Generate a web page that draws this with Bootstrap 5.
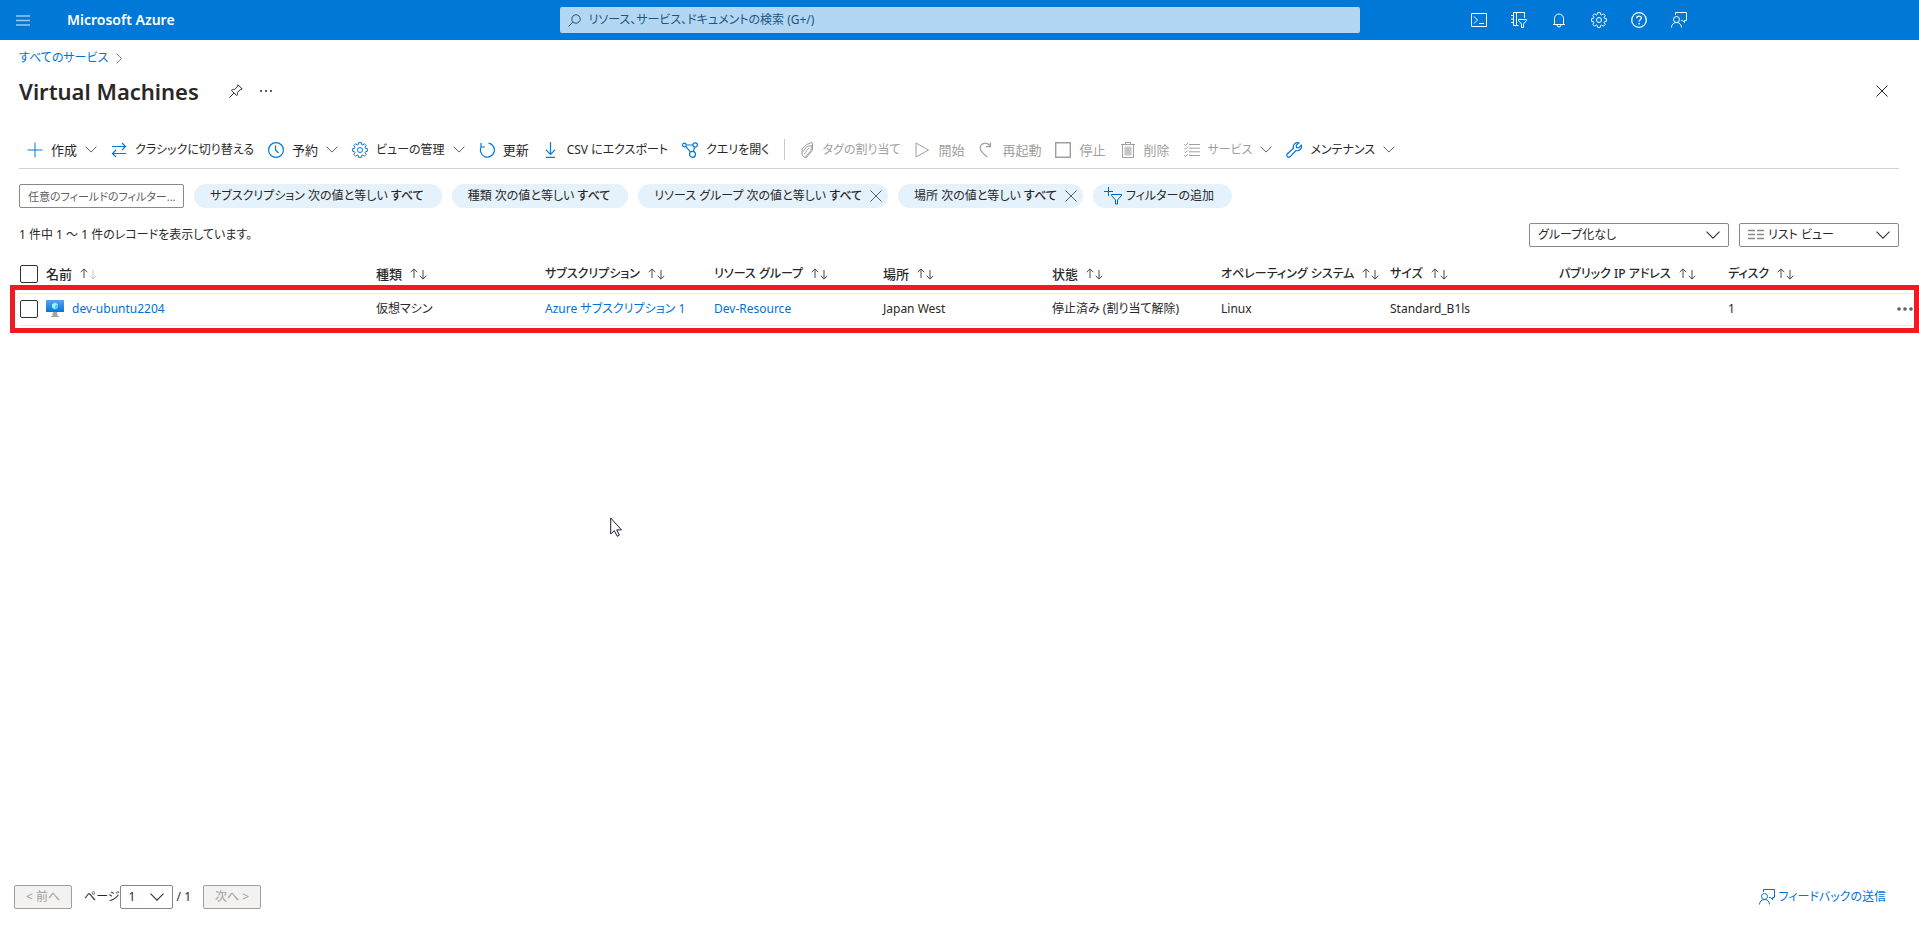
<!DOCTYPE html>
<html lang="ja">
<head>
<meta charset="utf-8">
<meta name="viewport" content="width=device-width, initial-scale=1">
<title>Virtual Machines - Microsoft Azure</title>
<link href="https://cdn.jsdelivr.net/npm/bootstrap@5.3.0/dist/css/bootstrap.min.css" rel="stylesheet">
<style>
  :root { --az-blue: #0078d7; --az-ink: #292827; --az-line: #d2d0ce; }
  body { font-family: "Noto Sans", "Noto Sans CJK JP", sans-serif; font-size: 12px; line-height: 18px; color: var(--az-ink); font-feature-settings: "palt"; }
  button, input, select { font-feature-settings: inherit; }
  a { color: #0072d6; text-decoration: none; }
  svg { display: block; flex: none; fill: none; stroke: currentColor; }
  svg.solid { stroke: none; fill: currentColor; }
  .topbar { display: grid; grid-template-columns: 1fr minmax(200px, 800px) 1fr; height: 40px; background: var(--az-blue); color: #fff; }
  .icon-btn { display: flex; align-items: center; justify-content: center; width: 40px; height: 40px; padding: 0; border: 0; background: none; color: inherit; }
  .icon-btn.compact { width: 26px; height: 26px; }
  .icon-btn.menu { width: 46px; }
  .top-tools { padding-left: 99px; }
  .brand { font-size: 14px; font-weight: 600; color: #fff; margin-left: 21px; }
  .top-search { height: 26px; border: 0; border-radius: 2px; background: #b3d7f3; color: #1b5586; }
  .top-search input { border: 0; background: none; color: inherit; outline: 0; padding: 0; }
  .top-search input::placeholder { color: #1b5586; opacity: 1; }
  .page-pad { padding-left: 19px; padding-right: 20px; }
  .crumbs { padding-top: 9px; padding-bottom: 8px; }
  .page-title { font-size: 22px; line-height: 32px; font-weight: 600; margin: 0; }
  .cmdbar { height: 38px; border-bottom: 1px solid var(--az-line); padding-left: 8px; gap: 14px; }
  .cmd { display: flex; align-items: center; gap: 8px; padding: 0; border: 0; background: none; color: var(--az-ink); white-space: nowrap; }
  .kanji { font-size: 13px; }
  .cmd svg { color: var(--az-blue); }
  .cmd svg.chev { color: #605e5c; }
  .cmd:disabled, .cmd:disabled svg, .cmd.off, .cmd.off svg { color: #a19f9d; }
  .cmd.off svg.chev { color: #605e5c; }
  .field { height: 24px; font-size: 12px; line-height: 18px; padding: 2px 8px; border: 1px solid #8a8886; border-radius: 2px; color: var(--az-ink); background-color: #fff; text-overflow: ellipsis; }
  .field::placeholder { color: #605e5c; opacity: 1; font-size: 11px; }
  select.field { padding-right: 24px; background-image: url("data:image/svg+xml,%3Csvg xmlns='http://www.w3.org/2000/svg' width='14' height='8'%3E%3Cpath d='M.5.7 7 7.2 13.500.7' fill='none' stroke='%23323130' stroke-width='1.1'/%3E%3C/svg%3E"); background-position: right 8px center; background-size: 14px 8px; }
  select.view-mode { padding-left: 28px; background-image: url("data:image/svg+xml,%3Csvg xmlns='http://www.w3.org/2000/svg' width='14' height='8'%3E%3Cpath d='M.5.7 7 7.2 13.500.7' fill='none' stroke='%23323130' stroke-width='1.1'/%3E%3C/svg%3E"), url("data:image/svg+xml,%3Csvg xmlns='http://www.w3.org/2000/svg' width='16' height='12'%3E%3Cpath d='M0 1.500h7M9 1.500h7M0 5.500h7M9 5.500h7M0 9.500h7M9 9.500h7' stroke='%238a8886' stroke-width='1.500'/%3E%3C/svg%3E"); background-repeat: no-repeat; background-position: right 8px center, left 8px center; background-size: 14px 8px, 16px 12px; }
  .w-filter { width: 165px; padding-right: 4px; } .w-group { width: 200px; } .w-view { width: 160px; } .w-page { width: 53px; }
  .filters { gap: 10px; padding-top: 15px; }
  .records { gap: 10px; padding-top: 15px; }
  .pill { display: flex; align-items: center; height: 24px; padding: 0 18px 0 16px; border: 0; border-radius: 12px; background: #e5f1fb; color: var(--az-ink); white-space: nowrap; }
  .pill b { font-weight: 500; }
  .pill.closable { padding-right: 6px; }
  .pill.add { padding-left: 11px; }
  .pill-x { border: 0; background: none; padding: 0; color: #605e5c; margin-left: 8px; }
  .grid-wrap { padding: 9px 0 0 19px; }
  .vm-table { table-layout: fixed; margin: 0; width: 100%; }
  .vm-table th, .vm-table td { padding: 0; vertical-align: middle; white-space: nowrap; color: var(--az-ink); }
  .vm-table th { height: 37px; font-weight: 500; border-bottom: 1px solid #edebe9; }
  .vm-table td { height: 32px; border-bottom: 1px solid #edebe9; }
  .col-check { width: 27px; } .col-name { width: 330px; } .col-more { width: 22px; }
  .vm-table .form-check-input { display: block; width: 18px; height: 18px; margin: 0 0 0 1px; border: 1px solid #323130; border-radius: 2px; }
  .sort { display: inline-flex; align-items: center; gap: 8px; padding: 0; border: 0; background: none; color: inherit; font-weight: inherit; }
  .sort svg { color: #484644; }
  .sort .idle { stroke: #c8c6c4; }
  .row-mark { position: absolute; left: 10px; right: 0; top: 38px; height: 48px; border: 5px solid #ed1c24; pointer-events: none; }
  .pager { padding: 0 33px 19px 14px; }
  .page-btn { height: 24px; width: 58px; padding: 0; font-size: 12px; border: 1px solid #a19f9d; border-radius: 2px; background: #f3f2f1; color: #a19f9d; }
  .pointer { position: absolute; left: 610px; top: 517px; pointer-events: none; }
  svg.pointer { fill: #fff; color: #1f1c33; }
</style>
</head>
<body class="d-flex flex-column min-vh-100">
<svg width="0" height="0" class="position-absolute" aria-hidden="true">
  <symbol id="i-chev" viewBox="0 0 12 7"><path d="M.5.6 6 6.100 11.500.6"/></symbol>
  <symbol id="i-x" viewBox="0 0 12 12"><path d="M.5.5l11 11M11.500.5l-11 11"/></symbol>
  <symbol id="i-gear" viewBox="0 0 16 16"><path d="M6.700.6h2.600l.4 1.900 1 .4 1.700-1.100 1.800 1.800-1.100 1.700.4 1 1.900.4v2.600l-1.900.4-.4 1 1.100 1.700-1.800 1.800-1.700-1.100-1 .4-.4 1.900H6.700l-.4-1.900-1-.4-1.700 1.100-1.800-1.800 1.100-1.700-.4-1-1.900-.4V6.700l1.900-.4.4-1-1.100-1.700 1.800-1.800 1.700 1.100 1-.4z"/><circle cx="8" cy="8" r="2.500"/></symbol>
  <symbol id="i-feedback" viewBox="0 0 16 16"><path d="M4.500 3V.5h11v8h-2v2l-2-2h-1.500"/><circle cx="5.500" cy="7.500" r="3"/><path d="M.5 15.500c0-3 2.200-5 5-5s5 2 5 5"/></symbol>
  <symbol id="i-sort" viewBox="0 0 17 12"><path d="M4 10V1M.7 4.200 4 .9l3.300 3.300M13 2v9M9.700 7.800l3.300 3.300 3.300-3.300"/></symbol>
</svg>

<header class="topbar align-items-center">
  <div class="d-flex align-items-center">
    <button class="icon-btn menu" aria-label="メニュー"><svg width="14" height="11" stroke-width="1.500" opacity=".6"><path d="M0 1h14M0 5.500h14M0 10h14"/></svg></button>
    <a href="#" class="brand">Microsoft Azure</a>
  </div>
  <label class="top-search d-flex align-items-center px-2 gap-2">
    <svg width="13" height="13"><circle cx="8" cy="5" r="4.200"/><path d="M5 8 .5 12.500"/></svg>
    <input type="search" class="flex-grow-1" placeholder="リソース、サービス、ドキュメントの検索 (G+/)" aria-label="検索">
  </label>
  <div class="d-flex top-tools">
    <button class="icon-btn" aria-label="Cloud Shell"><svg width="16" height="14"><path d="M.5.5h15v13H.5zM3 3.500 6.500 7 3 10.500M8 10.500h5"/></svg></button>
    <button class="icon-btn" aria-label="ディレクトリ"><svg width="16" height="16"><path d="M2.500.5h11V6M2.500.5v13h5M5.500.5v13M0 3.500h3M0 7h3M0 10.500h3"/><path d="M7.500 7.500h8v1L12.500 12v3.500h-2V12l-3-3.500z"/></svg></button>
    <button class="icon-btn" aria-label="通知"><svg width="12" height="15"><path d="M1.500 11.500V5.500a4.500 4.500 0 0 1 9 0v6M0 11.500h12M4 12a2 2 0 0 0 4 0"/></svg></button>
    <button class="icon-btn" aria-label="設定"><svg width="16" height="16"><use href="#i-gear"/></svg></button>
    <button class="icon-btn" aria-label="ヘルプ"><svg width="16" height="16" stroke-width="1.300"><circle cx="8" cy="8" r="7.300"/><path d="M5.800 6.200C5.800 3.300 10.300 3.400 10.300 6c0 1.700-2.200 1.700-2.200 3.600M8.100 10.800v1.600"/></svg></button>
    <button class="icon-btn" aria-label="フィードバック"><svg width="16" height="16"><use href="#i-feedback"/></svg></button>
  </div>
</header>

<main class="flex-grow-1">
  <div class="page-pad">
    <nav class="crumbs d-flex align-items-center gap-2" aria-label="階層リンク">
      <a href="#">すべてのサービス</a>
      <svg width="7" height="11" color="#8a8886"><path d="M.7.7 5.700 5.500.7 10.300"/></svg>
    </nav>
    <div class="d-flex align-items-center">
      <h1 class="page-title me-3">Virtual Machines</h1>
      <button class="icon-btn compact ms-2" aria-label="ピン留め"><svg width="14" height="14"><path d="M9 .8 13.200 5l-1 .8-.9-.2-2.800 2.800c.3 1.300 0 2.400-.8 3.200L2.400 6.300c.8-.8 1.900-1.100 3.200-.8l2.800-2.800-.2-.9zM4.900 9.100.5 13.500"/></svg></button>
      <button class="icon-btn compact ms-1" aria-label="その他"><svg class="solid" width="12" height="2" color="#605e5c"><path d="M0 0h2v2H0zM5 0h2v2H5zM10 0h2v2h-2z"/></svg></button>
      <button class="icon-btn compact ms-auto me-1" aria-label="閉じる"><svg width="12" height="12"><use href="#i-x"/></svg></button>
    </div>
    <div class="cmdbar d-flex align-items-center mt-4" role="toolbar" aria-label="コマンド">
      <button class="cmd kanji"><svg width="16" height="16"><path d="M8 .5v15M.5 8h15"/></svg>作成<svg class="chev" width="12" height="7"><use href="#i-chev"/></svg></button>
      <button class="cmd"><svg width="16" height="16" stroke-width="1.200"><path d="M1 4.500h13.500M11 1l3.500 3.500L11 8M15 11.500H1.500M5 8l-3.500 3.500L5 15"/></svg>クラシックに切り替える</button>
      <button class="cmd kanji"><svg width="16" height="16" stroke-width="1.200"><circle cx="8" cy="8" r="7.400"/><path d="M7.500 3.500V8l3 3"/></svg>予約<svg class="chev" width="12" height="7"><use href="#i-chev"/></svg></button>
      <button class="cmd"><svg width="16" height="16"><use href="#i-gear"/></svg>ビューの管理<svg class="chev" width="12" height="7"><use href="#i-chev"/></svg></button>
      <button class="cmd kanji"><svg width="16" height="16" stroke-width="1.200"><path d="M2 1v4h4M2.300 4.700a7 7 0 1 0 7.200-3.500"/></svg>更新</button>
      <button class="cmd"><svg width="16" height="16" stroke-width="1.200"><path d="M7.500 0v12M3 7.800l4.500 4.500L12 7.800M3 15.300h9"/></svg>CSV にエクスポート</button>
      <button class="cmd"><svg width="16" height="16" stroke-width="1.200"><circle cx="2.400" cy="3" r="1.800"/><circle cx="13.200" cy="3" r="2.200"/><circle cx="10.500" cy="12.300" r="3"/><path d="M4.200 3H11M3.700 4.300l4.700 5.600M12.500 5.200l-1 4.200"/></svg>クエリを開く</button>
      <div class="vr my-2"></div>
      <button class="cmd" disabled><svg width="16" height="16"><path d="M3 7 7.500 2.500l5.500-2 .5 1.500M3 7v6l3 2.500 6-7 .5-5-4.500 1L3 10.500M5 12l5-6"/><path d="M13.500 2v6L8 15l-2 .5"/></svg>タグの割り当て</button>
      <button class="cmd kanji" disabled><svg width="16" height="16"><path d="M2 1v14l12.500-7z"/></svg>開始</button>
      <button class="cmd kanji" disabled><svg width="16" height="16" stroke-width="1.200"><path d="M12.500.5v4.200H8M12.300 4.400C10-.3 2.200.3 2.200 6.200c0 3 3 5 7 9"/></svg>再起動</button>
      <button class="cmd kanji" disabled><svg width="16" height="16"><path d="M.7.7h14.600v14.600H.7z" stroke-width="1.400"/></svg>停止</button>
      <button class="cmd kanji" disabled><svg width="16" height="16"><path d="M1 2.500h14M5.500 2.500v-2h5v2M2.500 2.500v13h11v-13"/><path d="M5 5h6v8H5z" fill="#c8c6c4" stroke="#c8c6c4"/></svg>削除</button>
      <button class="cmd off"><svg width="16" height="16"><path d="M5 2.500h11M5 6.200h11M5 9.800h11M5 13.500h11M.3 2.300l1.200 1.200L4 1M.3 6l1.200 1.200L4 4.700M.3 9.600l1.200 1.200L4 8.300M.3 13.300l1.200 1.200L4 12"/></svg>サービス<svg class="chev" width="12" height="7"><use href="#i-chev"/></svg></button>
      <button class="cmd"><svg width="16" height="16" stroke-width="1.200"><path d="M12.800.9a4.200 4.200 0 0 0-5.300 5.300L1.200 12a2 2 0 0 0 2.800 2.800l6-6.300a4.200 4.200 0 0 0 5.300-5.300l-2.600 2.600-2.200-.4-.3-2.200z"/></svg>メンテナンス<svg class="chev" width="12" height="7"><use href="#i-chev"/></svg></button>
    </div>

    <div class="filters d-flex align-items-center">
      <input type="text" class="field w-filter" placeholder="任意のフィールドのフィルター..." aria-label="任意のフィールドのフィルター">
      <button class="pill">サブスクリプション 次の値と等しい&nbsp;<b>すべて</b></button>
      <button class="pill">種類 次の値と等しい&nbsp;<b>すべて</b></button>
      <div class="pill closable">リソース グループ 次の値と等しい&nbsp;<b>すべて</b><button class="pill-x" aria-label="削除"><svg width="12" height="12"><use href="#i-x"/></svg></button></div>
      <div class="pill closable">場所 次の値と等しい&nbsp;<b>すべて</b><button class="pill-x" aria-label="削除"><svg width="12" height="12"><use href="#i-x"/></svg></button></div>
      <button class="pill add"><svg width="18" height="18" class="me-1" color="#0063d1"><path d="M4.500 0v9M0 4.500h9M7.500 7.500h10v1L13.500 13v4h-2v-4l-4-4.500z"/></svg>フィルターの追加</button>
    </div>

    <div class="records d-flex align-items-center">
      <span>1 件中 1 ～ 1 件のレコードを表示しています。</span>
      <select class="form-select field w-group ms-auto" aria-label="グループ化"><option>グループ化なし</option></select>
      <select class="form-select field view-mode w-view" aria-label="表示"><option>リスト ビュー</option></select>
    </div>
  </div>

  <div class="grid-wrap position-relative">
    <table class="vm-table">
      <colgroup><col class="col-check"><col class="col-name"><col span="9"><col class="col-more"></colgroup>
      <thead><tr>
        <th><input type="checkbox" class="form-check-input" aria-label="すべて選択"></th>
        <th><button class="sort kanji">名前<svg width="17" height="12"><path d="M4 10V1M.7 4.200 4 .9l3.300 3.300"/><path class="idle" d="M13 2v9M9.700 7.800l3.300 3.300 3.300-3.300"/></svg></button></th>
        <th><button class="sort kanji">種類<svg width="17" height="12"><use href="#i-sort"/></svg></button></th>
        <th><button class="sort">サブスクリプション<svg width="17" height="12"><use href="#i-sort"/></svg></button></th>
        <th><button class="sort">リソース グループ<svg width="17" height="12"><use href="#i-sort"/></svg></button></th>
        <th><button class="sort kanji">場所<svg width="17" height="12"><use href="#i-sort"/></svg></button></th>
        <th><button class="sort kanji">状態<svg width="17" height="12"><use href="#i-sort"/></svg></button></th>
        <th><button class="sort">オペレーティング システム<svg width="17" height="12"><use href="#i-sort"/></svg></button></th>
        <th><button class="sort">サイズ<svg width="17" height="12"><use href="#i-sort"/></svg></button></th>
        <th><button class="sort">パブリック IP アドレス<svg width="17" height="12"><use href="#i-sort"/></svg></button></th>
        <th><button class="sort">ディスク<svg width="17" height="12"><use href="#i-sort"/></svg></button></th>
        <th></th>
      </tr></thead>
      <tbody><tr>
        <td><input type="checkbox" class="form-check-input" aria-label="dev-ubuntu2204 を選択"></td>
        <td><div class="d-flex align-items-center gap-2"><svg class="solid" width="18" height="18"><defs><linearGradient id="scr" x2="0" y2="1"><stop stop-color="#5ea0ef"/><stop offset="1" stop-color="#0078d4"/></linearGradient></defs><path d="M0 0h18v12H0z" fill="url(#scr)"/><path d="M7 12h4l.7 4H13v1H5v-1h1.300z" fill="#a3a3a3"/><path d="M9 2.500l3 1.700v3.600L9 9.500 6 7.800V4.200z" fill="#9cebff"/><path d="M9 6l3-1.800v3.600L9 9.500z" fill="#50c8ee"/></svg><a href="#">dev-ubuntu2204</a></div></td>
        <td>仮想マシン</td>
        <td><a href="#">Azure サブスクリプション 1</a></td>
        <td><a href="#">Dev-Resource</a></td>
        <td>Japan West</td>
        <td>停止済み (割り当て解除)</td>
        <td>Linux</td>
        <td>Standard_B1ls</td>
        <td></td>
        <td>1</td>
        <td><button class="icon-btn compact w-100 justify-content-start" aria-label="行のメニュー"><svg class="solid" width="16" height="4" color="#605e5c"><circle cx="2" cy="2" r="1.800"/><circle cx="8" cy="2" r="1.800"/><circle cx="14" cy="2" r="1.800"/></svg></button></td>
      </tr></tbody>
    </table>
    <div class="row-mark"></div>
  </div>
</main>

<footer class="pager d-flex align-items-center">
  <button class="page-btn" disabled>&lt; 前へ</button>
  <label for="page" class="ms-2 ps-1">ページ</label>
  <select id="page" class="form-select field w-page"><option>1</option></select>
  <span class="ps-1 me-2 pe-1">/ 1</span>
  <button class="page-btn" disabled>次へ &gt;</button>
  <a href="#" class="ms-auto d-flex align-items-center"><svg width="16" height="16" class="me-1"><use href="#i-feedback"/></svg>フィードバックの送信</a>
</footer>

<svg class="pointer" width="14" height="21"><path d="M.7 1v16l3.600-3.300 2.900 5.600 2.200-1.100-2.700-5.300h4.800z"/></svg>
<script src="https://cdn.jsdelivr.net/npm/bootstrap@5.3.0/dist/js/bootstrap.bundle.min.js"></script>
</body>
</html>
